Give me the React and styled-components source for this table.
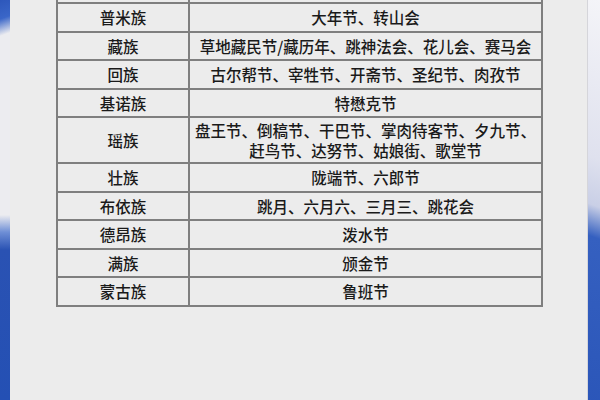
import React from "react";
import styled, { createGlobalStyle } from "styled-components";

const Global = createGlobalStyle`
  html, body { margin: 0; padding: 0; }
  body {
    width: 600px;
    height: 400px;
    overflow: hidden;
    background: #ececec;
    font-family: "Noto Sans CJK SC", "Noto Sans", sans-serif;
  }
`;

const Page = styled.div`
  display: flex;
  width: 600px;
  height: 400px;
  overflow: hidden;
`;

const LeftEdge = styled.div`
  width: 10px;
  flex: none;
  background:
    linear-gradient(160deg, #2d57bb 0px, #3a66c8 18px, rgba(236,236,240,0) 34px),
    linear-gradient(180deg, #ececf0 0px, #ececf0 215px, #6f8fd6 232px, #2a52b3 250px, #2450b4 400px);
`;

const RightEdge = styled.div`
  width: 12px;
  flex: none;
  background: linear-gradient(200deg, #f4f4f8 0px, #dfe1ee 150px, #c9cfe6 195px, #3560c0 225px, #2a55b8 400px);
  border-left: 1px solid #d5d5da;
`;

const Card = styled.div`
  flex: 1;
  background: #ececec;
  display: flex;
  justify-content: flex-start;
  align-items: flex-start;
  padding-left: 46px;
  overflow: hidden;
`;

const Table = styled.table`
  border-collapse: collapse;
  table-layout: fixed;
  width: 485px;
  color: #1a1a1a;
  font-size: 15.5px;
  font-weight: 500;
  background: #ececec;
`;

const Row = styled.tr`
  height: ${(p) => p.$h || 28.5}px;
`;

const Cell = styled.td`
  border: 2px solid #7f7f7f;
  border-top-style: ${(p) => (p.$open ? "none" : "solid")};
  text-align: center;
  vertical-align: middle;
  padding: 0 3px;
  line-height: 20px;
  white-space: normal;
`;

const NameCol = styled.col`
  width: 132px;
`;
const FestCol = styled.col`
  width: 353px;
`;

const rows = [
  ["普米族", "大年节、转山会"],
  ["藏族", "草地藏民节/藏历年、跳神法会、花儿会、赛马会"],
  ["回族", "古尔帮节、宰牲节、开斋节、圣纪节、肉孜节"],
  ["基诺族", "特懋克节"],
  ["瑶族", "盘王节、倒稿节、干巴节、掌肉待客节、夕九节、赶鸟节、达努节、姑娘街、歌堂节", 46],
  ["壮族", "陇端节、六郎节"],
  ["布依族", "跳月、六月六、三月三、跳花会"],
  ["德昂族", "泼水节"],
  ["满族", "颁金节"],
  ["蒙古族", "鲁班节"],
];

export default function App() {
  return (
    <>
      <Global />
      <Page>
        <LeftEdge />
        <Card>
          <Table>
            <colgroup>
              <NameCol />
              <FestCol />
            </colgroup>
            <tbody>
              <Row $h={3}>
                <Cell $open />
                <Cell $open />
              </Row>
              {rows.map(([n, f, h]) => (
                <Row key={n} $h={h}>
                  <Cell>{n}</Cell>
                  <Cell>{f}</Cell>
                </Row>
              ))}
            </tbody>
          </Table>
        </Card>
        <RightEdge />
      </Page>
    </>
  );
}
